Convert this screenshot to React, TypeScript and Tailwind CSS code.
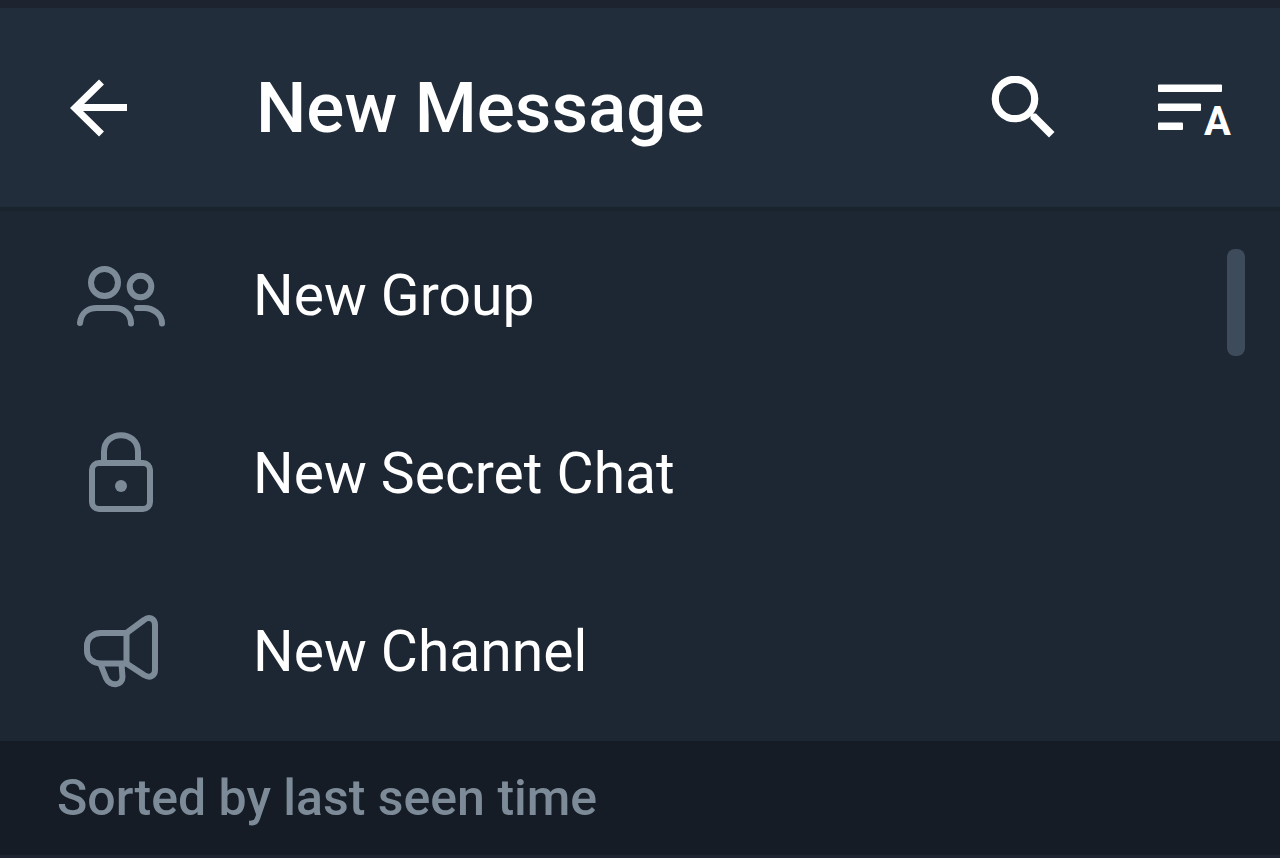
import type { ReactNode } from 'react'

function BackIcon() {
  return (
    <svg viewBox="0 0 60 60" className="size-[60px]" fill="none" stroke="currentColor" strokeWidth="7" aria-hidden="true">
      <path d="M59 29.500H8M33.500 4L7 30L33.500 56" strokeLinejoin="miter" />
    </svg>
  )
}

function SearchIcon() {
  return (
    <svg viewBox="0 0 64 64" className="size-[64px]" fill="none" stroke="currentColor" aria-hidden="true">
      <circle cx="24" cy="23" r="19.700" strokeWidth="7.200" />
      <path d="M40.500 37.500H45L63.500 56L58 61.500L39.500 43V38.500Z" fill="currentColor" stroke="none" />
    </svg>
  )
}

function SortIcon() {
  return (
    <svg viewBox="0 0 80 80" className="size-[80px]" fill="currentColor" aria-hidden="true">
      <rect x="2" y="16.500" width="64" height="7.500" rx="1" />
      <rect x="2" y="35.500" width="43" height="7.500" rx="1" />
      <rect x="2" y="54.500" width="25" height="7.500" rx="1" />
      <text x="48" y="67" className="font-['Roboto',sans-serif] text-[40px] font-bold">A</text>
    </svg>
  )
}

function GroupIcon() {
  return (
    <svg viewBox="0 0 92 92" className="size-[92px]" fill="none" stroke="currentColor" strokeWidth="6" strokeLinecap="round" aria-hidden="true">
      <circle cx="29.500" cy="32.500" r="13.500" />
      <circle cx="65.500" cy="36.500" r="10.800" />
      <path d="M5 73C6 63 13 58 22 58H39C49 58 56 64 56 73.500" />
      <path d="M62 58H69C79 58 87 65 87 73.500" />
    </svg>
  )
}

function LockIcon() {
  return (
    <svg viewBox="0 0 92 92" className="size-[92px]" fill="none" stroke="currentColor" strokeWidth="6" aria-hidden="true">
      <rect x="17" y="35" width="58" height="46" rx="7" />
      <path d="M29 35V24C29 1.500 63 1.500 63 24V35" />
      <circle cx="46" cy="58" r="6" fill="currentColor" stroke="none" />
    </svg>
  )
}

function MegaphoneIcon() {
  return (
    <svg viewBox="0 0 92 92" className="size-[92px]" fill="none" stroke="currentColor" strokeWidth="6" strokeLinejoin="round" aria-hidden="true">
      <path d="M51.500 27H26C18 27 12 32 12 40V45C12 52 18 57.500 26 57.500H51.500Z" />
      <path d="M51.500 27L69 14C74 10 80 12.500 80 19V64C80 70 75 72.500 69 69L51.500 57.500" />
      <path d="M25.500 58L31 72C35 81 47.500 80 47.500 71L46.500 58" />
    </svg>
  )
}

const actions: { label: string; icon: ReactNode }[] = [
  { label: 'New Group', icon: <GroupIcon /> },
  { label: 'New Secret Chat', icon: <LockIcon /> },
  { label: 'New Channel', icon: <MegaphoneIcon /> },
]

export default function App() {
  return (
    <main className="min-h-screen border-t-8 border-[#1d232f] bg-[#1e2530] font-['Roboto',sans-serif] text-white">
      <header className="relative z-10 flex items-center bg-[#212d3b] py-[49px] pr-11 pl-[68px] shadow-[0_4px_1px_#1a242f]">
        <button type="button" aria-label="Back" className="shrink-0">
          <BackIcon />
        </button>
        <h1 className="ml-32 flex-1 text-[71px] leading-[101px] font-medium">New Message</h1>
        <button type="button" aria-label="Search" className="mr-[101px] shrink-0">
          <SearchIcon />
        </button>
        <button type="button" aria-label="Sort contacts" className="shrink-0">
          <SortIcon />
        </button>
      </header>

      <section className="relative bg-[#1d2733]">
        <ul>
          {actions.map((action) => (
            <li key={action.label}>
              <button type="button" className="flex w-full items-center gap-[86px] py-[43px] pl-[75px] text-left">
                <span className="shrink-0 text-[#7d8b99]">{action.icon}</span>
                <span className="text-[57px] leading-[90px]">{action.label}</span>
              </button>
            </li>
          ))}
        </ul>
        <div className="absolute top-[42px] right-[35px] h-[107px] w-[18px] rounded-lg bg-[#3e4b5b]" />
      </section>

      <h2 className="border-b-3 border-[#1e2530] bg-[#151c26] px-[57px] py-6 text-[50px] leading-[66px] font-medium text-[#7d8b99]">
        Sorted by last seen time
      </h2>
    </main>
  )
}
